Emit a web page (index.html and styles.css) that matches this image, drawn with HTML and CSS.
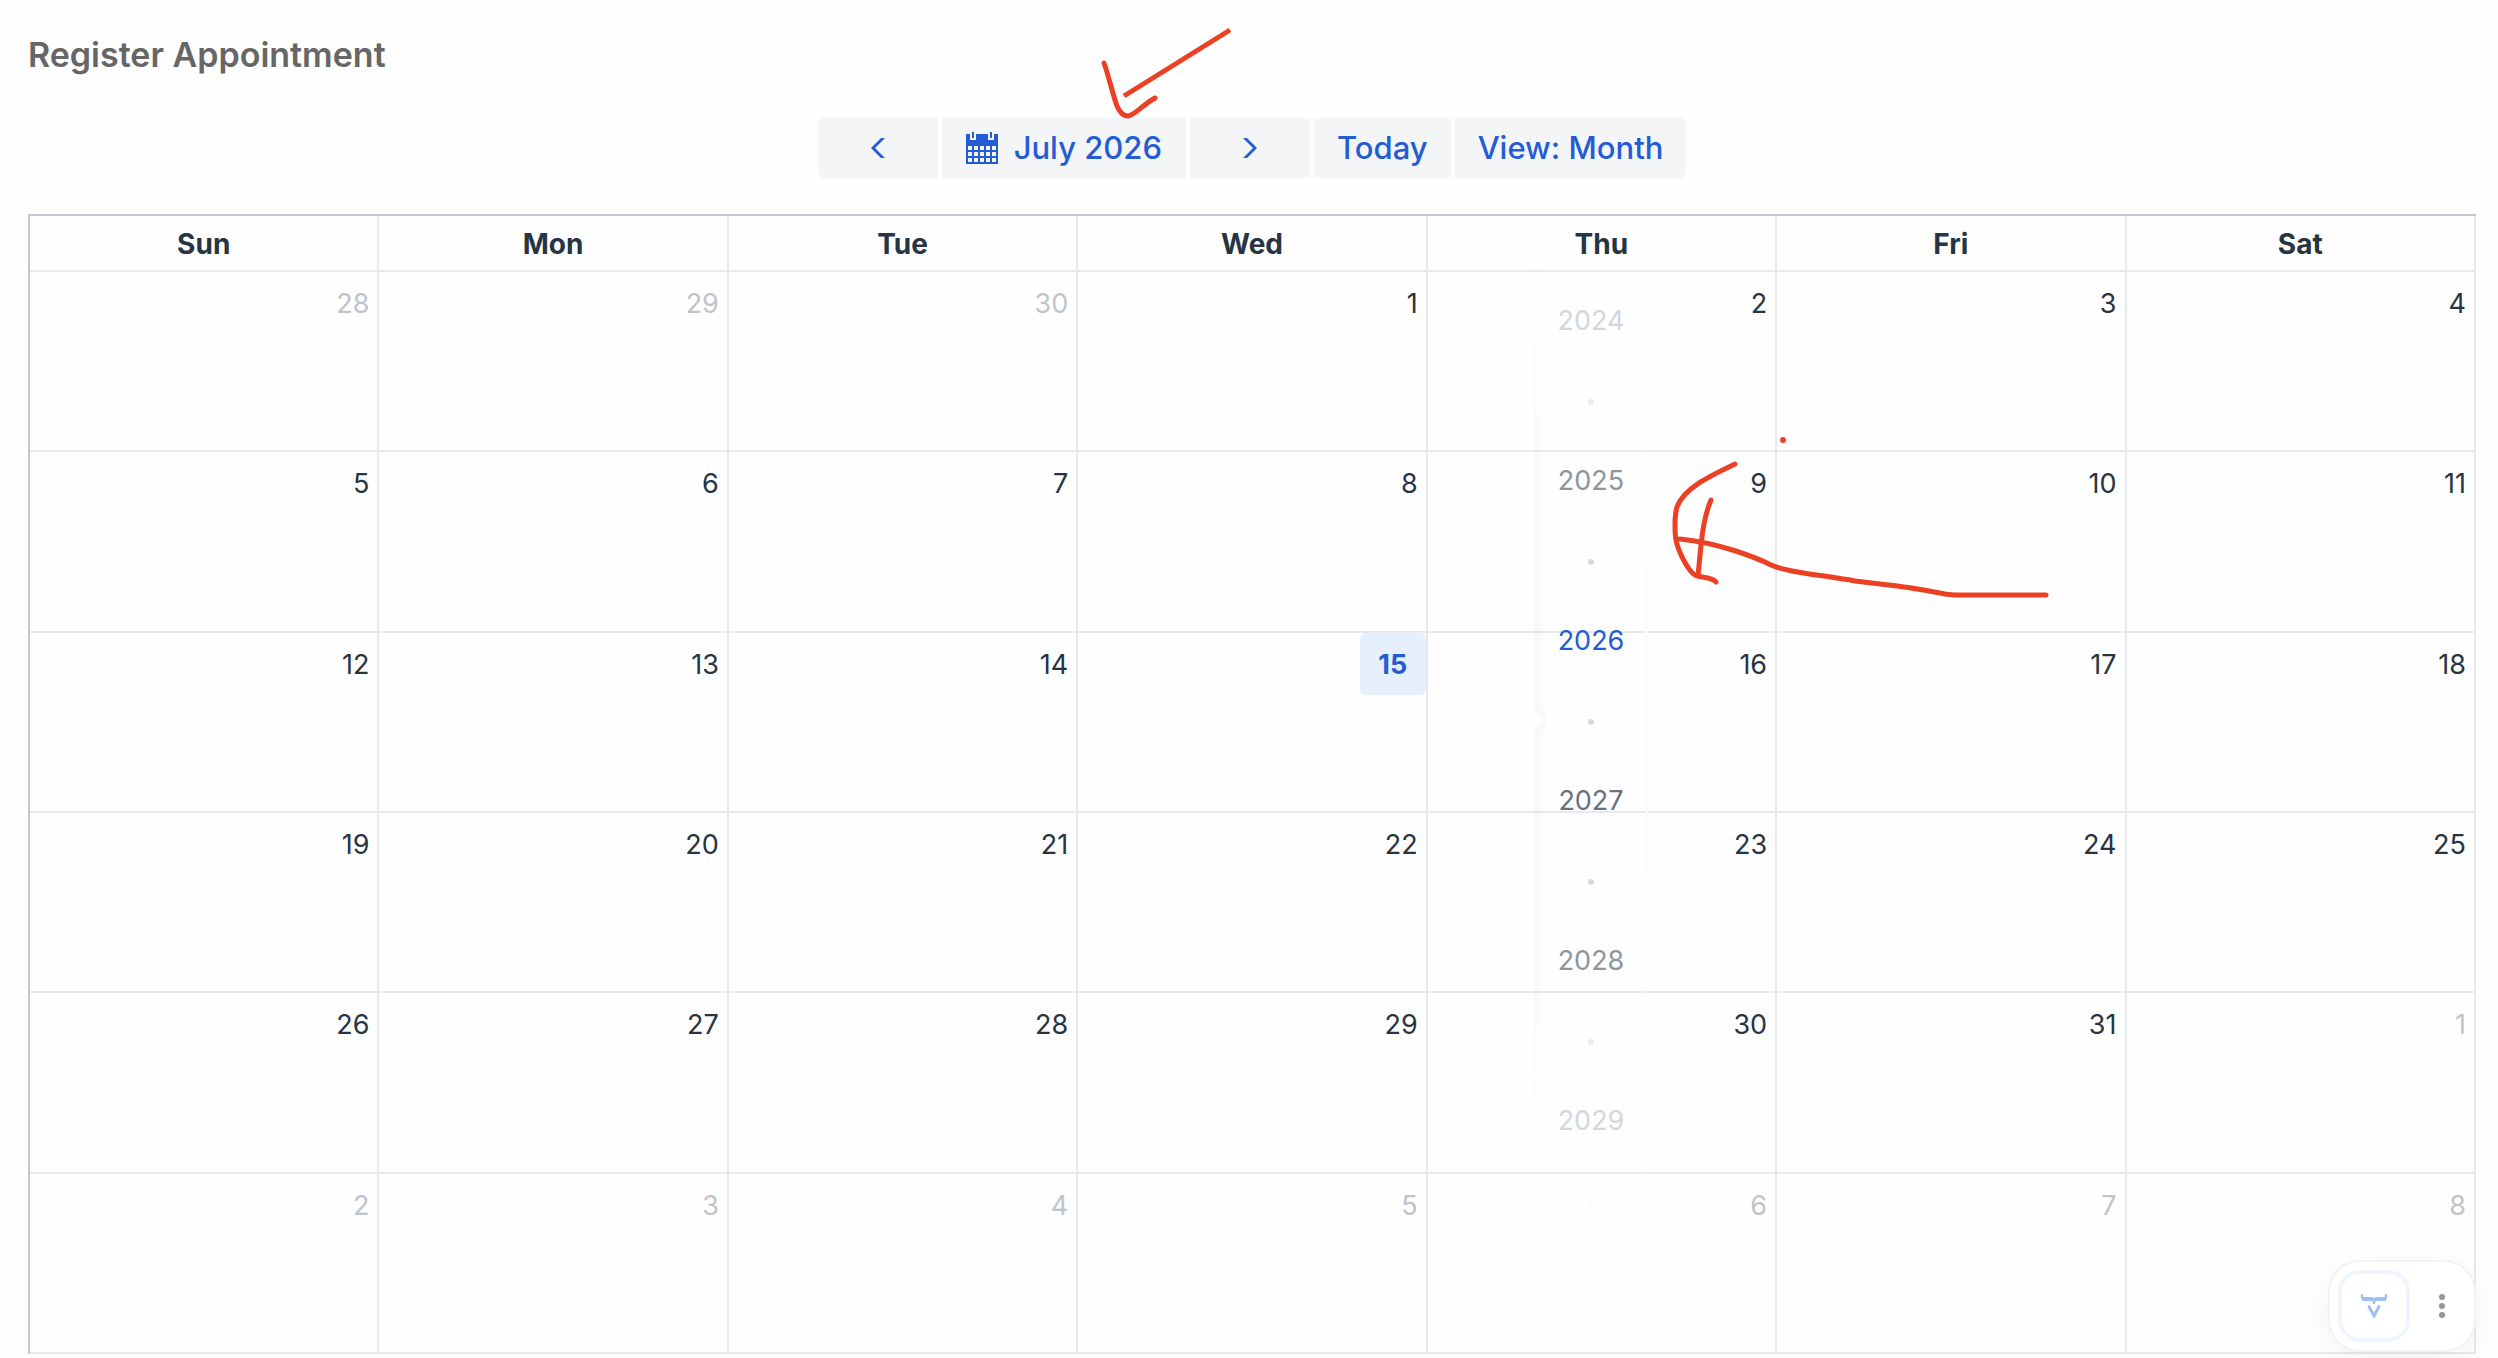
FILE: index.html
```html
<!DOCTYPE html>
<html lang="en">
<head>
<meta charset="utf-8">
<title>Register Appointment</title>
<link rel="stylesheet" href="styles.css">
</head>
<body>
<main class="page">
  <h1 class="title">Register Appointment</h1>

  <div class="toolbar">
    <button class="tool arrow" type="button" aria-label="Previous month">
      <svg width="14" height="20" viewBox="0 0 14 20"><path d="M10 0h4L4 10l10 10h-4L0 10z" fill="currentColor"/></svg>
    </button>
    <button class="tool month" type="button">
      <svg width="32" height="32" viewBox="0 0 32 32" shape-rendering="crispEdges">
        <path fill="currentColor" fill-rule="evenodd" d="M0 2h4v6h6V2h12v6h6V2h4v30H0zM2 14v4h4v-4zM8 14v4h4v-4zM14 14v4h4v-4zM20 14v4h4v-4zM26 14v4h4v-4zM2 20v4h4v-4zM8 20v4h4v-4zM14 20v4h4v-4zM20 20v4h4v-4zM26 20v4h4v-4zM2 26v4h4v-4zM8 26v4h4v-4zM14 26v4h4v-4zM20 26v4h4v-4zM26 26v4h4v-4z"/>
        <path fill="currentColor" d="M6 0h2v6H6zM24 0h2v6h-2z"/>
      </svg>
      <span>July 2026</span>
    </button>
    <button class="tool arrow" type="button" aria-label="Next month">
      <svg width="14" height="20" viewBox="0 0 14 20"><path d="M4 0H0l10 10L0 20h4l10-10z" fill="currentColor"/></svg>
    </button>
    <button class="tool" type="button">Today</button>
    <button class="tool" type="button">View: Month</button>
  </div>

  <table class="calendar">
    <thead>
      <tr><th scope="col">Sun</th><th scope="col">Mon</th><th scope="col">Tue</th><th scope="col">Wed</th><th scope="col">Thu</th><th scope="col">Fri</th><th scope="col">Sat</th></tr>
    </thead>
    <tbody>
      <tr><td class="other">28</td><td class="other">29</td><td class="other">30</td><td>1</td><td>2</td><td>3</td><td>4</td></tr>
      <tr><td>5</td><td>6</td><td>7</td><td>8</td><td>9</td><td>10</td><td>11</td></tr>
      <tr><td>12</td><td>13</td><td>14</td><td class="today"><span class="badge">15</span></td><td>16</td><td>17</td><td>18</td></tr>
      <tr><td>19</td><td>20</td><td>21</td><td>22</td><td>23</td><td>24</td><td>25</td></tr>
      <tr><td>26</td><td>27</td><td>28</td><td>29</td><td>30</td><td>31</td><td class="other">1</td></tr>
      <tr><td class="other">2</td><td class="other">3</td><td class="other">4</td><td class="other">5</td><td class="other">6</td><td class="other">7</td><td class="other">8</td></tr>
    </tbody>
  </table>
</main>

<div class="years">
  <svg class="notch" width="28" height="48" viewBox="0 0 28 48">
    <path d="M0 8L10 16Q17 24 10 32L0 40z" fill="#f7f8fa"/>
    <path d="M0 14L8 20Q12 24 8 28L0 34z" fill="#fff"/>
  </svg>
  <ul class="year-list">
    <li class="far">2024</li>
    <li class="near">2025</li>
    <li class="current">2026</li>
    <li class="next">2027</li>
    <li class="near">2028</li>
    <li class="far">2029</li>
  </ul>
</div>

<svg class="ink ink-top" width="140" height="110" viewBox="1095 15 140 110">
  <path d="M1230 30L1124 96"/>
  <path stroke-linecap="round" d="M1104 63C1109 77 1112 92 1117 106C1120 113 1124 116 1128 116C1135 115 1141 106 1155 98"/>
</svg>
<svg class="ink ink-side" width="400" height="180" viewBox="1660 430 400 180">
  <g stroke-linecap="round">
    <path d="M1735 464C1716 473 1684 487 1677 507C1674 517 1675 535 1676 540C1678 550 1687 570 1695 575C1701 578 1712 577 1716 582"/>
    <path d="M1711 500C1703 519 1702 537 1701 545L1698 576"/>
    <path d="M1680 539C1719 543 1755 557 1771 565C1785 572 1822 575 1855 581L1880 584C1910 587 1925 590 1945 594L1954 595H2046"/>
  </g>
  <circle cx="1783" cy="440" r="3" fill="#ec4024" stroke="none"/>
</svg>

<div class="widget">
  <button class="assistant" type="button" aria-label="Assistant">
    <svg width="26" height="24" viewBox="0 0 26 24" fill="none" stroke="#a0c1ee">
      <path stroke-width="4" d="M1 5H10L13 6L16 5H25"/>
      <path stroke-width="2" d="M1 0V5M25 0V5M13 5V10"/>
      <path stroke-width="3" stroke-linecap="round" d="M8 12.500L13 22L18 12.500"/>
    </svg>
  </button>
  <button class="more" type="button" aria-label="More options">
    <svg width="6" height="24" viewBox="0 0 6 24" fill="#969696"><circle cx="3" cy="3" r="3"/><circle cx="3" cy="12" r="3"/><circle cx="3" cy="21" r="3"/></svg>
  </button>
</div>
</body>
</html>
```
FILE: styles.css
```css
* {
  box-sizing: border-box;
}

body {
  margin: 0;
  position: relative;
  background: #fefefe;
  color: #273444;
  font-family: Inter, "Liberation Sans", sans-serif;
  font-size: 27px;
}

.page {
  min-height: 100vh;
  padding: 35px 22px 4px 28px;
}

.title {
  margin: 0 0 43px;
  color: #666;
  font-size: 34px;
  font-weight: 600;
  line-height: 40px;
}

.toolbar {
  display: flex;
  justify-content: center;
  gap: 4px;
  margin-bottom: 36px;
}

.tool {
  display: flex;
  align-items: center;
  justify-content: center;
  gap: 16px;
  height: 60px;
  padding: 0 23px;
  border: 0;
  background: #f4f5f7;
  color: #245cd4;
  font: 500 31px/60px Inter, "Liberation Sans", sans-serif;
}

.tool:first-child {
  border-radius: 6px 0 0 6px;
}

.tool:last-child {
  border-radius: 0 6px 6px 0;
}

.arrow {
  width: 120px;
}

.month {
  padding: 0 24px;
}

.calendar {
  width: 100%;
  height: calc(100vh - 218px);
  table-layout: fixed;
  border-spacing: 0;
  border-top: 2px solid #c4c8d3;
  border-left: 2px solid #c4c8d3;
}

.calendar th,
.calendar td {
  padding: 0;
  border-right: 2px solid #e6e9ee;
  border-bottom: 2px solid #e6e9ee;
}

.calendar th {
  height: 56px;
  padding-top: 2px;
  font-size: 28px;
  font-weight: 700;
  line-height: 34px;
}

.calendar td {
  height: 180px;
  padding-right: 8px;
  text-align: right;
  vertical-align: top;
  line-height: 64px;
}

.calendar .other {
  color: #c0c4ca;
}

.calendar .today {
  padding-right: 0;
}

.badge {
  display: inline-block;
  width: 66px;
  height: 62px;
  border-radius: 6px;
  background: #e6f0fd;
  color: #245cd4;
  font-weight: 700;
  text-align: center;
  vertical-align: top;
}

.years {
  position: absolute;
  top: 216px;
  left: 1534px;
  width: 114px;
  height: 1010px;
}

.years::before {
  content: "";
  position: absolute;
  inset: 0;
  border-right: 2px solid #fbfbfc;
  background: linear-gradient(90deg, rgba(110, 125, 145, 0.06), rgba(110, 125, 145, 0) 12px);
  -webkit-mask-image: linear-gradient(transparent, #000 40%, #000 60%, transparent);
  mask-image: linear-gradient(transparent, #000 40%, #000 60%, transparent);
}

.notch {
  position: absolute;
  top: 480px;
  left: 0;
}

.year-list {
  position: relative;
  margin: 0;
  padding: 85px 0 0;
  list-style: none;
  text-align: center;
  line-height: 40px;
}

.year-list li {
  height: 160px;
}

.year-list li::after {
  content: "";
  display: block;
  width: 6px;
  height: 6px;
  margin: 58px auto 0;
  border-radius: 50%;
  background: #d8dae0;
}

.far {
  color: #d4d6da;
}

.year-list .far::after,
.year-list .next + .near::after {
  background: #ebecef;
}

.year-list .far:last-child::after {
  background: #fafafa;
}

.near {
  color: #8e959f;
}

.current {
  color: #245cd4;
}

.next {
  color: #687180;
}

.ink {
  position: absolute;
  fill: none;
  stroke: #ec4024;
  stroke-width: 5px;
  pointer-events: none;
}

.ink-top {
  top: 15px;
  left: 1095px;
}

.ink-side {
  top: 430px;
  left: 1660px;
}

.widget {
  position: fixed;
  right: 22px;
  bottom: 6px;
  display: flex;
  align-items: center;
  padding: 8px;
  border: 2px solid #f2f2f2;
  border-radius: 32px;
  background: rgba(255, 255, 255, 0.85);
  box-shadow: 0 8px 32px rgba(0, 0, 0, 0.05);
}

.widget button {
  display: flex;
  align-items: center;
  justify-content: center;
  height: 72px;
  padding: 0;
  background: none;
}

.assistant {
  width: 72px;
  border: 4px solid #f0f6ff;
  border-radius: 22px;
}

.widget .more {
  width: 56px;
  border: 0;
  padding-left: 8px;
}
```
